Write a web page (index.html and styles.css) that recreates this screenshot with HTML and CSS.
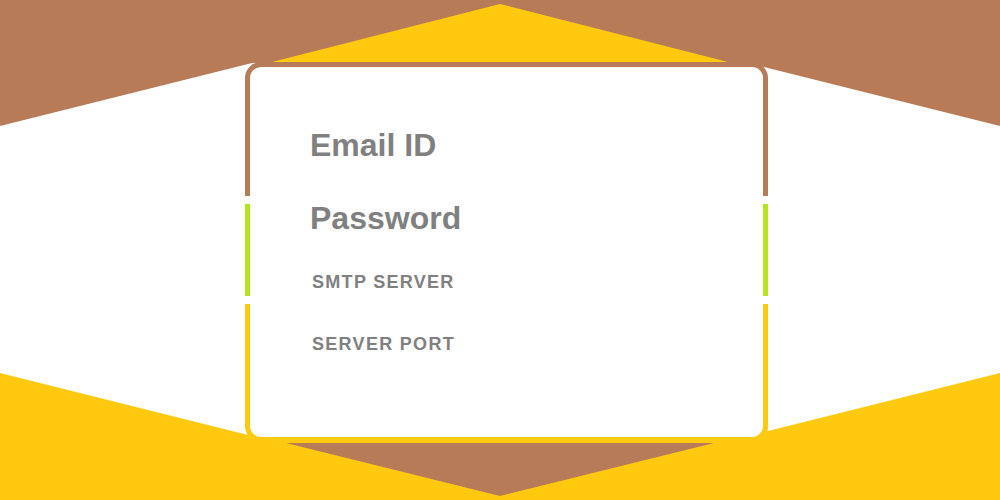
FILE: index.html
```html
<!DOCTYPE html>
<html>
<head>
<meta charset="utf-8">
<link rel="stylesheet" href="styles.css">
</head>
<body>
<div class="stage">
  <svg class="backdrop" viewBox="0 0 1000 500" preserveAspectRatio="none" aria-hidden="true">
    <rect x="0" y="0" width="1000" height="250" fill="#b87b58"/>
    <rect x="0" y="250" width="1000" height="250" fill="#fec90e"/>
    <polygon points="0,126 500,1 1000,126 1000,373 500,498 0,373" fill="#ffffff"/>
    <rect x="248" y="0" width="517" height="63" fill="#b87b58"/>
    <polygon points="272,62 500,4 728,62" fill="#fec90e"/>
    <rect x="248" y="441" width="517" height="59" fill="#fec90e"/>
    <polygon points="286,443 500,496 714,443" fill="#b87b58"/>
  </svg>
  <div class="card">
    <div class="frame">
      <div class="seg seg-top"></div>
      <div class="seg seg-mid"></div>
      <div class="seg seg-bot"></div>
    </div>
    <div class="fields">
      <div class="label label-lg label-email">Email ID</div>
      <div class="label label-lg label-pass">Password</div>
      <div class="label label-sm label-smtp">SMTP SERVER</div>
      <div class="label label-sm label-port">SERVER PORT</div>
    </div>
  </div>
</div>
</body>
</html>
```
FILE: styles.css
```css
html, body {
  margin: 0;
  padding: 0;
}
body {
  width: 1000px;
  height: 500px;
  overflow: hidden;
  background: #ffffff;
  font-family: "Liberation Sans", Arial, sans-serif;
}
.stage {
  position: relative;
  width: 1000px;
  height: 500px;
  box-sizing: border-box;
  padding: 62px 0 0 245px;
}
.backdrop {
  position: absolute;
  left: 0;
  top: 0;
  width: 1000px;
  height: 500px;
  display: block;
}
.card {
  position: relative;
  display: grid;
  width: 523px;
  height: 380px;
}
.frame,
.fields {
  grid-area: 1 / 1;
}
.frame {
  display: flex;
  flex-direction: column;
  gap: 8px;
}
.seg {
  background: #ffffff;
  border-style: solid;
  border-width: 0 5px;
}
.seg-top {
  height: 129px;
  border-color: #b87b58;
  border-top-width: 5px;
  border-radius: 16px 16px 0 0;
}
.seg-mid {
  height: 92px;
  border-color: #b5e61d;
}
.seg-bot {
  flex: 1;
  border-color: #fec90e;
  border-bottom-width: 5px;
  border-radius: 0 0 16px 16px;
}
.fields {
  position: relative;
  display: flex;
  flex-direction: column;
  align-items: flex-start;
  padding: 67px 0 0 65px;
  color: #808080;
  font-weight: bold;
}
.label-lg {
  font-size: 32px;
  line-height: 32px;
}
.label-sm {
  font-size: 18px;
  line-height: 18px;
  letter-spacing: 1.3px;
  padding-left: 2px;
}
.label-pass {
  margin-top: 41px;
}
.label-smtp {
  margin-top: 39px;
}
.label-port {
  margin-top: 44px;
}
```
